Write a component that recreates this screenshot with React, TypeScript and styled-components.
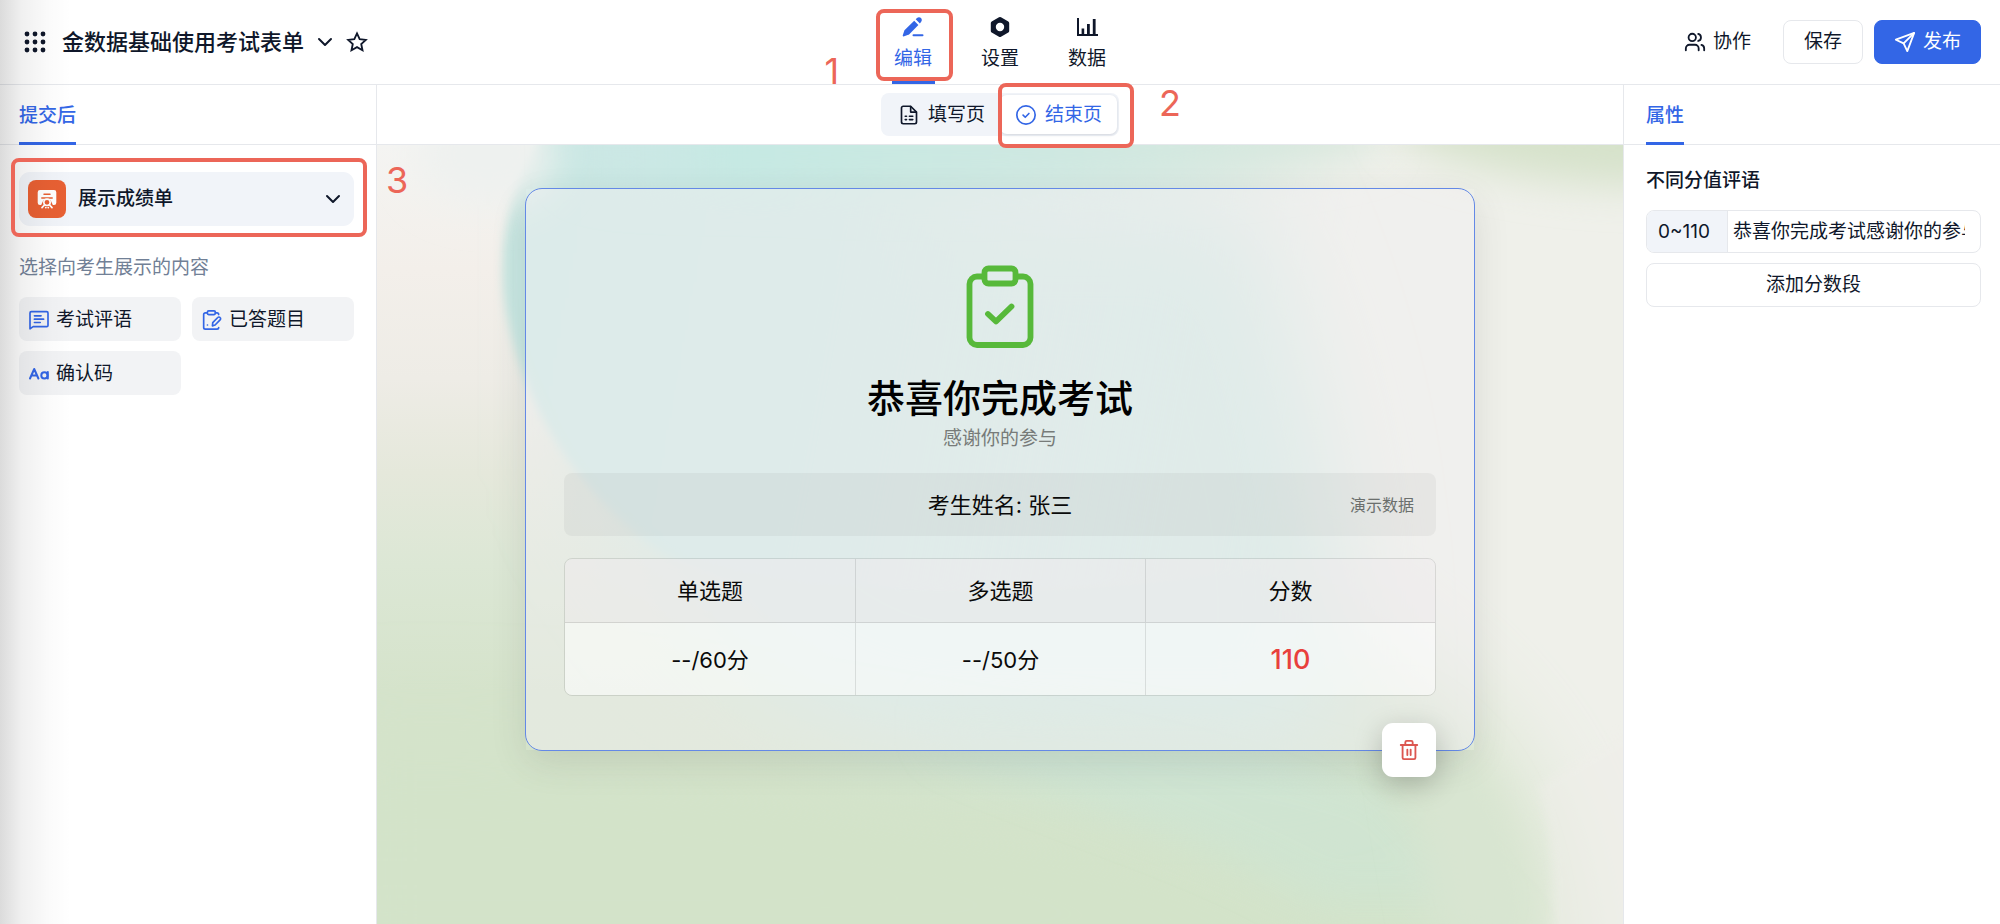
import React from "react";
import styled, { createGlobalStyle, css } from "styled-components";

const ink = "#0f172a";
const blue = "#3366e6";
const line = "#e6e8ec";
const soft = "#f1f4f9";
const coral = "#ec6658";

const GlobalStyle = createGlobalStyle`
  *, *::before, *::after { box-sizing: border-box; }
  body {
    margin: 0;
    color: ${ink};
    background: #fff;
    font-family: Inter, "Noto Sans CJK SC", sans-serif;
    font-size: 19px;
    line-height: 28px;
  }
  button, input { font: inherit; color: inherit; }
  button { cursor: pointer; }
  h1, h2, p { margin: 0; }
`;

const Page = styled.div`
  position: relative;
  min-height: 100vh;
  display: flex;
  flex-direction: column;
`;

const EdgeShade = styled.div`
  position: absolute;
  inset: 0 auto 0 0;
  width: 72px;
  pointer-events: none;
  background: linear-gradient(90deg, rgba(0, 0, 0, 0.14), rgba(0, 0, 0, 0.06) 30%, rgba(0, 0, 0, 0.015) 70%, transparent);
`;

const Header = styled.header`
  display: grid;
  grid-template-columns: 1fr auto 1fr;
  align-items: center;
  height: 85px;
  padding: 0 19px;
  border-bottom: 1px solid ${line};
`;

const HeaderStart = styled.div`
  display: flex;
  align-items: center;
  padding-left: 5px;
`;

const HeaderEnd = styled.div`
  display: flex;
  align-items: center;
  justify-content: flex-end;
  gap: 11px;
`;

const IconButton = styled.button`
  display: flex;
  padding: 0;
  border: 0;
  background: none;
`;

const FormTitle = styled.h1`
  margin: 0 9px 0 16px;
  font-size: 22px;
  font-weight: 500;
  white-space: nowrap;
`;

const StarButton = styled(IconButton)`
  margin-left: 9px;
`;

const Nav = styled.nav`
  align-self: stretch;
  display: flex;
  gap: 44px;
`;

const NavItem = styled.a<{ $active?: boolean }>`
  position: relative;
  width: 43px;
  padding-top: 17px;
  display: flex;
  flex-direction: column;
  align-items: center;
  gap: 8px;
  text-decoration: none;
  white-space: nowrap;
  color: ${(p) => (p.$active ? blue : ink)};
  border-bottom: 3px solid ${(p) => (p.$active ? blue : "transparent")};
`;

const actionBase = css`
  display: flex;
  align-items: center;
  justify-content: center;
  gap: 7px;
  height: 44px;
  border-radius: 8px;
  white-space: nowrap;
`;

const Action = styled.button<{ $kind: "plain" | "outline" | "primary" }>`
  ${actionBase}
  padding: 0 ${(p) => (p.$kind === "primary" ? 19 : 20)}px;
  border: 1px solid ${(p) => ({ plain: "transparent", outline: line, primary: blue })[p.$kind]};
  background: ${(p) => (p.$kind === "primary" ? blue : "#fff")};
  color: ${(p) => (p.$kind === "primary" ? "#fff" : ink)};
`;

const Body = styled.div`
  flex: 1;
  display: grid;
  grid-template-columns: 377px minmax(0, 1fr) 377px;
`;

const SidePanel = styled.aside<{ $side: "left" | "right" }>`
  ${(p) => (p.$side === "left" ? "border-right" : "border-left")}: 1px solid ${line};
`;

const PanelTabs = styled.div<{ $inset: number }>`
  display: flex;
  height: 60px;
  padding-left: ${(p) => p.$inset}px;
  border-bottom: 1px solid ${line};
`;

const PanelTab = styled.button`
  height: 60px;
  padding: 4px 0 0;
  border: 0;
  border-bottom: 3px solid ${blue};
  background: none;
  color: ${blue};
  font-weight: 500;
`;

const LeftContent = styled.div`
  padding: 27px 22px 20px 19px;
`;

const RightContent = styled.div`
  padding: 22px 19px 20px 22px;
`;

const PickerWrap = styled.div`
  position: relative;
`;

const Picker = styled.button`
  display: flex;
  align-items: center;
  gap: 12px;
  width: 100%;
  height: 54px;
  padding: 0 9px;
  border: 0;
  border-radius: 11px;
  background: ${soft};
  font-weight: 500;
  > svg { margin-left: auto; }
`;

const PickerIcon = styled.span`
  display: flex;
  align-items: center;
  justify-content: center;
  width: 38px;
  height: 38px;
  border-radius: 8px;
  background: #e86033;
`;

const Hint = styled.p`
  margin: 28px 0 15px;
  color: #718096;
`;

const Options = styled.div`
  display: grid;
  grid-template-columns: 1fr 1fr;
  gap: 10px 11px;
`;

const Option = styled.button`
  display: flex;
  align-items: center;
  gap: 7px;
  height: 44px;
  padding: 1px 10px 0;
  border: 0;
  border-radius: 8px;
  background: #f2f3f5;
`;

const IconTint = styled.span`
  display: flex;
  color: ${blue};
`;

const Main = styled.main`
  display: flex;
  flex-direction: column;
  min-width: 0;
`;

const PageBar = styled.div`
  display: flex;
  align-items: center;
  justify-content: center;
  height: 60px;
  border-bottom: 1px solid ${line};
`;

const Segments = styled.div`
  position: relative;
  display: flex;
  padding: 2px;
  border-radius: 8px;
  background: ${soft};
`;

const Segment = styled.button<{ $active?: boolean }>`
  display: flex;
  align-items: center;
  gap: 9px;
  height: 39px;
  padding: 0 15px 0 16px;
  border: 0;
  border-radius: 7px;
  white-space: nowrap;
  color: ${(p) => (p.$active ? blue : ink)};
  background: ${(p) => (p.$active ? "#fff" : "transparent")};
  box-shadow: ${(p) => (p.$active ? "0 1px 3px rgba(15, 23, 42, 0.14)" : "none")};
`;

const Canvas = styled.section`
  position: relative;
  isolation: isolate;
  flex: 1;
  overflow: hidden;
  padding: 43px 24px;
  background: #efeeea;
`;

const Backdrop = styled.svg`
  position: absolute;
  inset: 0;
  width: 100%;
  height: 100%;
  z-index: -1;
`;

const Card = styled.article`
  position: relative;
  display: flex;
  flex-direction: column;
  align-items: center;
  max-width: 950px;
  margin: 0 auto;
  padding: 76px 38px 54px;
  border: 1px solid #6489e6;
  border-radius: 17px;
  background: rgba(241, 240, 242, 0.5);
  color: #0a0a0a;
`;

const CardShade = styled.div`
  position: absolute;
  inset: 0;
  z-index: -1;
  border-radius: 17px;
  box-shadow: 0 12px 36px rgba(60, 60, 60, 0.13);
  clip-path: polygon(
    evenodd,
    -60px -60px, calc(100% + 60px) -60px, calc(100% + 60px) calc(100% + 60px), -60px calc(100% + 60px), -60px -60px,
    0 0, 100% 0, 100% 100%, 0 100%, 0 0
  );
`;

const CardTitle = styled.h2`
  margin-top: 25px;
  font-size: 38px;
  line-height: 48px;
  font-weight: 500;
  color: #000;
`;

const CardSubtitle = styled.p`
  margin-top: 3px;
  color: #777b79;
`;

const NameBar = styled.div`
  display: grid;
  grid-template-columns: 1fr auto 1fr;
  align-items: center;
  width: 100%;
  height: 63px;
  margin: 20px 0 22px;
  padding: 0 22px;
  border-radius: 8px;
  background: rgba(0, 0, 0, 0.04);
  font-size: 22px;
`;

const DemoTag = styled.span`
  justify-self: end;
  font-size: 16px;
  color: #6b6f6d;
`;

const ScoreTable = styled.table`
  width: 100%;
  table-layout: fixed;
  border-collapse: separate;
  border-spacing: 0;
  border: 1px solid rgba(0, 0, 0, 0.1);
  border-radius: 8px;
  font-size: 22px;
  overflow: hidden;
  th, td { padding: 0; text-align: center; font-weight: 400; }
  th { height: 64px; background: rgba(240, 236, 238, 0.5); border-bottom: 1px solid rgba(0, 0, 0, 0.1); }
  td { height: 72px; padding-top: 2px; background: rgba(255, 255, 255, 0.55); }
  th + th, td + td { border-left: 1px solid rgba(0, 0, 0, 0.1); }
`;

const Total = styled.strong`
  font-size: 27px;
  font-weight: 500;
  color: #e8403c;
`;

const DeleteButton = styled.button`
  position: absolute;
  right: 38px;
  bottom: -27px;
  display: flex;
  align-items: center;
  justify-content: center;
  width: 54px;
  height: 54px;
  border: 0;
  border-radius: 11px;
  background: #fff;
  color: #dc5650;
  box-shadow: 0 8px 28px rgba(0, 0, 0, 0.22);
`;

const SectionTitle = styled.h2`
  font-size: 19px;
  line-height: 28px;
  font-weight: 500;
`;

const RangeRow = styled.div`
  display: flex;
  height: 43px;
  margin: 15px 0 10px;
  border: 1px solid ${line};
  border-radius: 8px;
  overflow: hidden;
`;

const RangeLabel = styled.label`
  flex: none;
  width: 81px;
  display: flex;
  align-items: center;
  padding-left: 11px;
  background: ${soft};
  border-right: 1px solid ${line};
`;

const RangeInput = styled.input`
  flex: 1;
  min-width: 0;
  margin: 0 15px 0 5px;
  padding: 0;
  border: 0;
  outline: 0;
  background: none;
`;

const AddButton = styled.button`
  ${actionBase}
  width: 100%;
  border: 1px solid ${line};
  background: #fff;
`;

const Frame = styled.span<{ $inset: string }>`
  position: absolute;
  inset: ${(p) => p.$inset};
  z-index: 2;
  border: 4px solid ${coral};
  border-radius: 8px;
  pointer-events: none;
`;

const Step = styled.span<{ $top: number; $left: number }>`
  position: absolute;
  top: ${(p) => p.$top}px;
  left: ${(p) => p.$left}px;
  z-index: 2;
  font-size: 36px;
  line-height: 36px;
  font-weight: 400;
  color: ${coral};
  pointer-events: none;
`;

type IconProps = { size?: number; width?: number; children: React.ReactNode };

const LineIcon = ({ size = 20, width = 2, children }: IconProps) => (
  <svg
    width={size}
    height={size}
    viewBox="0 0 24 24"
    fill="none"
    stroke="currentColor"
    strokeWidth={width}
    strokeLinecap="round"
    strokeLinejoin="round"
    aria-hidden="true"
  >
    {children}
  </svg>
);

const AppsIcon = () => (
  <svg width="22" height="22" viewBox="0 0 22 22" fill="currentColor" aria-hidden="true">
    {[3, 11, 19].map((y) => [3, 11, 19].map((x) => <circle key={`${x}-${y}`} cx={x} cy={y} r="2.4" />))}
  </svg>
);

const ChevronIcon = () => (
  <LineIcon size={24}><path d="m6 9 6 6 6-6" /></LineIcon>
);

const StarIcon = () => (
  <LineIcon size={22}>
    <path d="M12 2.6l2.9 6.2 6.7.8-5 4.6 1.4 6.8-6-3.4-6 3.4 1.4-6.8-5-4.6 6.7-.8z" strokeLinejoin="miter" />
  </LineIcon>
);

const EditIcon = () => (
  <svg width="22" height="20" viewBox="0 0 22 20" fill="currentColor" aria-hidden="true">
    <path d="M12.2 3.8 16.4 8 7.3 17.2c-.3.3-.6.5-1 .6L1.5 19.4c-.5.1-.9-.3-.8-.8l1.4-4.4c.1-.4.3-.8.6-1.1z" />
    <path d="M13.7 2.3 15 1.1c1.1-1.1 2.9-1.1 4 0s1.1 2.9 0 4L17.9 6.4z" />
    <rect x="10.5" y="17.3" width="11" height="2" rx="1" />
  </svg>
);

const NutIcon = () => (
  <svg width="20" height="20" viewBox="0 0 20 20" fill="currentColor" aria-hidden="true">
    <path
      fillRule="evenodd"
      d="M9 .3a2 2 0 0 1 2 0l7.3 4.200a1.800 1.800 0 0 1 .9 1.600v7.800a1.800 1.800 0 0 1-.9 1.600L11 19.700a2 2 0 0 1-2 0l-7.300-4.200a1.800 1.800 0 0 1-.9-1.600V6.100a1.800 1.800 0 0 1 .9-1.600zM10 5.800a4.200 4.200 0 1 0 0 8.400 4.200 4.200 0 0 0 0-8.400z"
    />
  </svg>
);

const ChartIcon = () => (
  <svg width="21" height="20" viewBox="0 0 21 20" fill="currentColor" aria-hidden="true">
    <path d="M0 1h2v16h19v2H0z" />
    <rect x="4.6" y="11.5" width="2.6" height="6" />
    <rect x="10" y="7" width="2.8" height="11" />
    <rect x="15.8" y="2" width="2.8" height="16" />
  </svg>
);

const UsersIcon = () => (
  <LineIcon size={22}>
    <path d="M16 21v-2a4 4 0 0 0-4-4H6a4 4 0 0 0-4 4v2" />
    <circle cx="9" cy="7" r="4" />
    <path d="M22 21v-2a4 4 0 0 0-3-3.87" />
    <path d="M15.5 3.13a4 4 0 0 1 0 7.75" />
  </LineIcon>
);

const SendIcon = () => (
  <LineIcon size={22}>
    <path d="M22 2 2 9.5l8.5 4L14.5 22z" />
    <path d="M21.5 2.5 10.5 13.5" />
  </LineIcon>
);

const FormPageIcon = () => (
  <LineIcon size={20}>
    <path d="M14 1.5H5a2 2 0 0 0-2 2v17a2 2 0 0 0 2 2h14a2 2 0 0 0 2-2V8.5z" />
    <path d="M14 2v6.5h6.5" />
    <path d="M7.5 13.5h1.5M12.5 13.5h4M7.5 17.5h1.5M12.5 17.5h4" />
  </LineIcon>
);

const DoneIcon = () => (
  <LineIcon size={20}>
    <circle cx="12" cy="12" r="11" />
    <path d="m8.5 12.2 2.6 2.5 4.4-4.5" />
  </LineIcon>
);

const ReportIcon = () => (
  <svg width="20" height="20" viewBox="0 0 20 20" aria-hidden="true">
    <path fill="#fff" d="M3 1h14a2.3 2.3 0 0 1 2.3 2.3v10.4A2.3 2.3 0 0 1 17 16H3a2.3 2.3 0 0 1-2.3-2.3V3.3A2.3 2.3 0 0 1 3 1z" />
    <path d="M7 5.2h6M4.8 9h10.4" stroke="#e86033" strokeWidth="1.5" strokeLinecap="round" />
    <path d="M3.5 17.5 6.5 11h7l3 6.5z" fill="#e86033" />
    <circle cx="10" cy="13.3" r="3.2" fill="none" stroke="#fff" strokeWidth="1.6" />
    <path d="M7.4 16 5 18.6M12.6 16l2.4 2.6M8.8 18.6h.1M11.2 18.6h.1" stroke="#fff" strokeWidth="1.7" strokeLinecap="round" />
  </svg>
);

const CommentIcon = () => (
  <LineIcon size={20}>
    <path d="M1.2 22.5V3.5a1.5 1.5 0 0 1 1.5-1.5h18.6a1.5 1.5 0 0 1 1.5 1.5v15a1.5 1.5 0 0 1-1.5 1.5H5z" />
    <path d="M6.5 7h8M6.5 11h11M6.5 15h7" />
  </LineIcon>
);

const AnsweredIcon = () => (
  <LineIcon size={20}>
    <path d="M6 3.5H4a2 2 0 0 0-2 2V21a2 2 0 0 0 2 2h14a2 2 0 0 0 2-2M16 3.500h2a2 2 0 0 1 2 2" />
    <rect x="6.5" y="1" width="9.5" height="4.5" rx="1.5" />
    <path d="m12.5 19 .4-3.800 6-6.200a1.900 1.900 0 0 1 2.800 0 1.900 1.900 0 0 1 0 2.800l-6 6.200z" />
    <path d="M6.5 18h.1" />
  </LineIcon>
);

const LettersIcon = () => (
  <svg width="20" height="20" viewBox="0 0 20 20" fill="none" stroke="currentColor" strokeWidth="2" strokeLinecap="round" strokeLinejoin="round" aria-hidden="true">
    <path d="M1 14.5 5.2 5l4.2 9.5M2.6 11.4h5.2" />
    <circle cx="15.4" cy="11.4" r="3.1" />
    <path d="M18.8 8v6.5" />
  </svg>
);

const ClipboardIcon = () => (
  <svg width="68" height="84" viewBox="0 0 68 84" fill="none" stroke="#57b93a" strokeWidth="5.8" strokeLinecap="round" strokeLinejoin="round" aria-hidden="true">
    <path d="M17 11.5h-6A7.5 7.5 0 0 0 3.5 19v53.5A7.5 7.5 0 0 0 11 80h46a7.5 7.5 0 0 0 7.5-7.5V19a7.5 7.5 0 0 0-7.5-7.5H51" />
    <rect x="18.5" y="3.5" width="31" height="15" rx="4" />
    <path d="m22 49 8 7.5L45.5 41.5" />
  </svg>
);

const TrashIcon = () => (
  <LineIcon size={22}>
    <path d="M3 6.5h18M5 6.5v14a1.5 1.5 0 0 0 1.5 1.5h11a1.5 1.5 0 0 0 1.5-1.5v-14M8 6V3.5A1.5 1.5 0 0 1 9.5 2h5A1.5 1.5 0 0 1 16 3.5V6" />
    <path d="M10.2 11.5v6M13.8 11.5v6" />
  </LineIcon>
);

const CanvasArt = () => (
  <Backdrop viewBox="0 0 1246 779" preserveAspectRatio="none" aria-hidden="true">
    <defs>
      <linearGradient id="ground" x1="0" x2="0" y1="0" y2="1">
        <stop offset="0" stopColor="#f4f4f2" />
        <stop offset="0.16" stopColor="#f3efea" />
        <stop offset="0.3" stopColor="#eeece6" />
        <stop offset="0.42" stopColor="#e5e8db" />
        <stop offset="0.54" stopColor="#dce7d5" />
        <stop offset="0.7" stopColor="#d5e3cb" />
        <stop offset="1" stopColor="#d5e4cb" />
      </linearGradient>
      <linearGradient id="sea" x1="0" x2="1" y1="0" y2="0.1">
        <stop offset="0" stopColor="#c6e6e1" />
        <stop offset="0.4" stopColor="#cbe7e2" />
        <stop offset="1" stopColor="#dde9e6" stopOpacity="0" />
      </linearGradient>
      <linearGradient id="surf" x1="0" x2="1" y1="0" y2="0">
        <stop offset="0" stopColor="#d4e8ea" stopOpacity="0.2" />
        <stop offset="0.2" stopColor="#c5e9e3" />
        <stop offset="0.6" stopColor="#cee8e1" />
        <stop offset="1" stopColor="#dbe8dd" />
      </linearGradient>
      <filter id="b4" x="-20%" y="-20%" width="140%" height="140%"><feGaussianBlur stdDeviation="5" /></filter>
      <filter id="b24" x="-50%" y="-50%" width="200%" height="200%"><feGaussianBlur stdDeviation="20" /></filter>
      <filter id="b60" x="-60%" y="-60%" width="220%" height="220%"><feGaussianBlur stdDeviation="50" /></filter>
    </defs>
    <rect width="1246" height="779" fill="url(#ground)" />
    <path d="M740-60H1400V900H1190C1190 700 1160 640 1060 540S800 420 740 300z" fill="#eff0ea" filter="url(#b60)" />
    <path d="M220 60 220 330C300 460 400 590 560 600L960 600C960 520 980 300 860 60z" fill="#cbe7e0" filter="url(#b60)" />
    <path d="M185-40C120 40 120 130 132 180 150 270 210 360 290 410 380 450 600 460 900 430L1000-40z" fill="url(#sea)" filter="url(#b4)" />
    <ellipse cx="110" cy="10" rx="70" ry="50" fill="#eef1ef" filter="url(#b24)" />
    <path d="M-80 600C200 580 420 630 600 660S1000 740 1100 860H-80z" fill="#d3e3c9" filter="url(#b60)" />
    <path d="M560 560C700 570 900 600 1010 640L1120 760H940C840 700 700 660 560 600z" fill="#cce5d6" filter="url(#b24)" opacity="0.55" />
    <path d="M1020 560C1100 600 1150 680 1156 800H1060z" fill="#d8e5d1" filter="url(#b24)" />
    <path d="M190-60H1000V5C860 45 600 55 420 45 300 40 220 50 190 30z" fill="url(#surf)" filter="url(#b24)" />
    <path d="M1020-60H1300V40C1200 44 1080 25 1020-10z" fill="#d6e2ca" filter="url(#b24)" />
    <path d="M1175 799C1178 720 1172 680 1162 640L1290 560V799z" fill="#efeee9" filter="url(#b4)" opacity="0.5" />
  </Backdrop>
);

export default function App() {
  return (
    <Page>
      <GlobalStyle />
      <Header>
        <HeaderStart>
          <IconButton aria-label="应用"><AppsIcon /></IconButton>
          <FormTitle>金数据基础使用考试表单</FormTitle>
          <IconButton aria-label="切换表单"><ChevronIcon /></IconButton>
          <StarButton aria-label="收藏"><StarIcon /></StarButton>
        </HeaderStart>
        <Nav>
          <NavItem href="#edit" $active>
            <EditIcon />
            编辑
            <Frame $inset="9px -18px 0 -16px" />
            <Step $top={53} $left={-67}>1</Step>
          </NavItem>
          <NavItem href="#settings"><NutIcon />设置</NavItem>
          <NavItem href="#data"><ChartIcon />数据</NavItem>
        </Nav>
        <HeaderEnd>
          <Action $kind="plain"><UsersIcon />协作</Action>
          <Action $kind="outline">保存</Action>
          <Action $kind="primary"><SendIcon />发布</Action>
        </HeaderEnd>
      </Header>
      <Body>
        <SidePanel $side="left">
          <PanelTabs $inset={19}><PanelTab>提交后</PanelTab></PanelTabs>
          <LeftContent>
            <PickerWrap>
              <Picker>
                <PickerIcon><ReportIcon /></PickerIcon>
                展示成绩单
                <ChevronIcon />
              </Picker>
              <Frame $inset="-14px -13px -11px -8px" />
              <Step $top={-10} $left={367}>3</Step>
            </PickerWrap>
            <Hint>选择向考生展示的内容</Hint>
            <Options>
              <Option><IconTint><CommentIcon /></IconTint>考试评语</Option>
              <Option><IconTint><AnsweredIcon /></IconTint>已答题目</Option>
              <Option><IconTint><LettersIcon /></IconTint>确认码</Option>
            </Options>
          </LeftContent>
        </SidePanel>
        <Main>
          <PageBar>
            <Segments>
              <Segment><FormPageIcon />填写页</Segment>
              <Segment $active><DoneIcon />结束页</Segment>
              <Frame $inset="-10px -15px -12px 117px" />
              <Step $top={-8} $left={278}>2</Step>
            </Segments>
          </PageBar>
          <Canvas>
            <CanvasArt />
            <Card>
              <CardShade />
              <ClipboardIcon />
              <CardTitle>恭喜你完成考试</CardTitle>
              <CardSubtitle>感谢你的参与</CardSubtitle>
              <NameBar>
                <span />
                <span>考生姓名: 张三</span>
                <DemoTag>演示数据</DemoTag>
              </NameBar>
              <ScoreTable>
                <thead>
                  <tr><th scope="col">单选题</th><th scope="col">多选题</th><th scope="col">分数</th></tr>
                </thead>
                <tbody>
                  <tr><td>--/60分</td><td>--/50分</td><td><Total>110</Total></td></tr>
                </tbody>
              </ScoreTable>
              <DeleteButton aria-label="删除"><TrashIcon /></DeleteButton>
            </Card>
          </Canvas>
        </Main>
        <SidePanel $side="right">
          <PanelTabs $inset={22}><PanelTab>属性</PanelTab></PanelTabs>
          <RightContent>
            <SectionTitle>不同分值评语</SectionTitle>
            <RangeRow>
              <RangeLabel htmlFor="range-comment">0~110</RangeLabel>
              <RangeInput id="range-comment" type="text" defaultValue="恭喜你完成考试感谢你的参与" />
            </RangeRow>
            <AddButton>添加分数段</AddButton>
          </RightContent>
        </SidePanel>
      </Body>
      <EdgeShade />
    </Page>
  );
}
